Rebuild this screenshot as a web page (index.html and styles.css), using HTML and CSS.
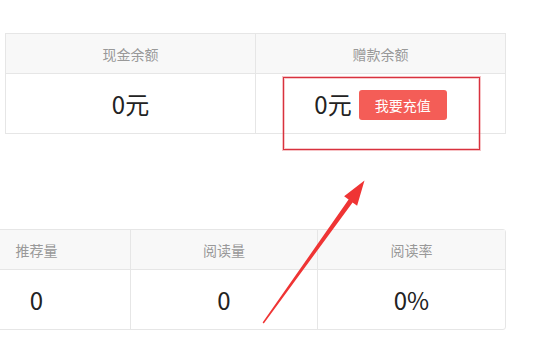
FILE: index.html
```html
<!DOCTYPE html>
<html lang="zh">
<head>
<meta charset="utf-8">
<link rel="stylesheet" href="styles.css">
</head>
<body>
<div class="page">
  <div class="table t1">
    <div class="th">现金余额</div>
    <div class="th">赠款余额</div>
    <div class="td">0元</div>
    <div class="td"><span>0元</span><button class="btn">我要充值</button></div>
  </div>
  <div class="table t2">
    <div class="th">推荐量</div>
    <div class="th">阅读量</div>
    <div class="th">阅读率</div>
    <div class="td">0</div>
    <div class="td">0</div>
    <div class="td">0%</div>
  </div>
  <div class="highlight"></div>
  <svg class="arrow" width="544" height="341" viewBox="0 0 544 341">
    <polygon points="262.6,322.6 348.6,199.5 344.1,196.3 364.5,180.5 357.1,205.7 352.6,202.5 263.8,323.4" fill="#ef3434"/>
  </svg>
</div>
</body>
</html>
```
FILE: styles.css
```css
html, body { margin: 0; padding: 0; background: #fff; }
body { font-family: "Noto Sans CJK SC", "Noto Sans", sans-serif; color: #333; }
.page { position: relative; width: 544px; height: 341px; overflow: hidden; padding-top: 33px; box-sizing: border-box; }
.table { display: grid; border: 1px solid #e6e6e6; box-sizing: border-box; }
.t1 { margin-left: 5px; width: 501px; grid-template-columns: 249px 250px; }
.t2 { margin-left: -58px; margin-top: 95px; width: 564px; grid-template-columns: 187px 187px 188px; border-radius: 0 3px 3px 0; }
.th { height: 39px; background: #f8f8f8; border-bottom: 1px solid #e6e6e6; display: flex; align-items: center; justify-content: center; font-size: 14px; color: #999; }
.td { height: 59px; display: flex; align-items: center; justify-content: center; font-size: 24px; color: #222; gap: 7px; }
.th + .th, .td + .td { border-left: 1px solid #e6e6e6; }
.btn { border: none; background: #f45d57; color: #fff; font-family: inherit; font-size: 14px; width: 88px; height: 30px; border-radius: 3px; padding: 0; margin-top: 2px; }
.highlight { position: absolute; left: 283px; top: 77px; width: 197px; height: 73px; border: 1px solid #d8323e; box-shadow: 0 0 0 1px rgba(230, 80, 90, 0.35), inset 0 0 0 1px rgba(230, 80, 90, 0.3); box-sizing: border-box; }
.arrow { position: absolute; left: 0; top: 0; }
```
